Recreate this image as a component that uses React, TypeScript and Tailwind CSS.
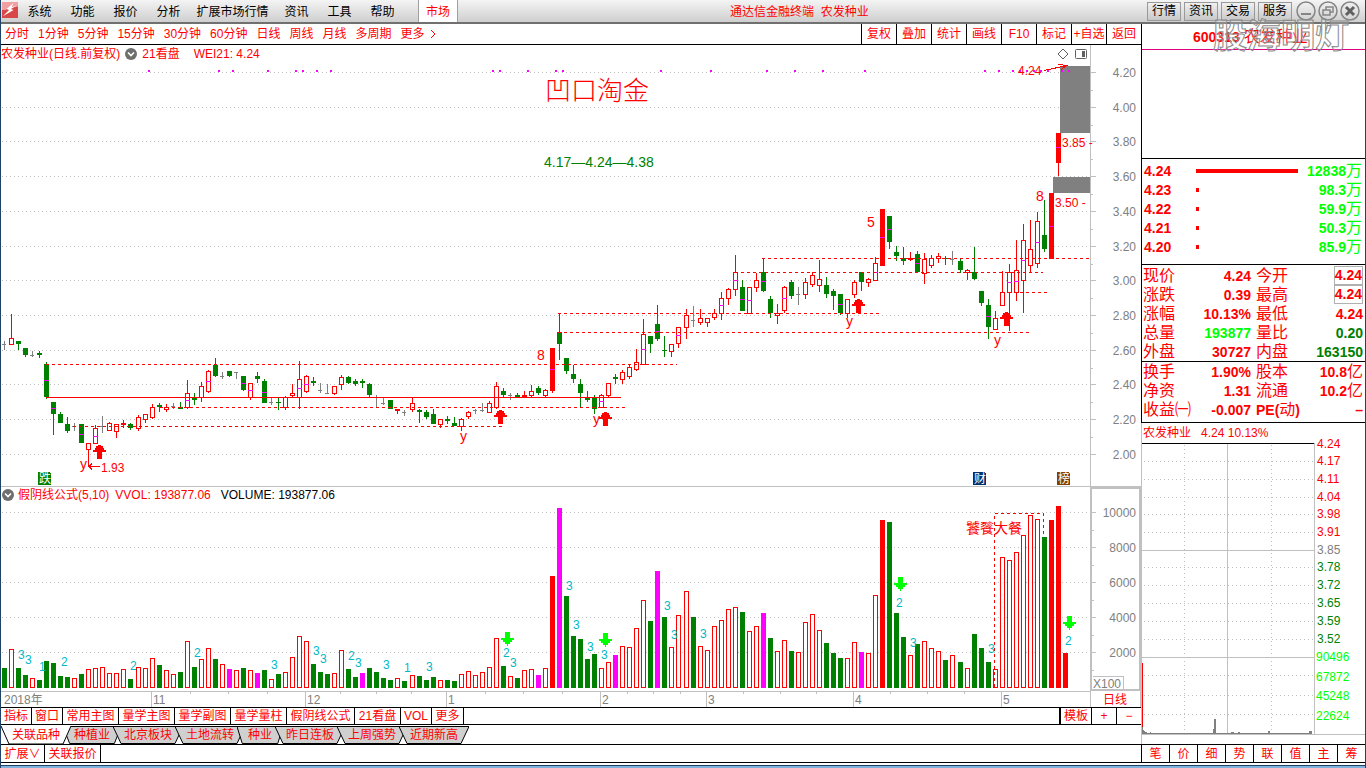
import type { ReactNode } from "react";
import clsx from "clsx";

// [kind, high, body top, body bottom, low, mid mark]
// r = hollow red, R = solid red, g = green, d = flat day (body top is the cross)
type Candle = [string, number, number, number, number, number?];

const candles: Candle[] = [
  ["d", 341, 344, 344, 350], ["r", 314, 338, 345, 345], ["g", 341, 341, 344, 350], ["g", 348, 348, 355, 357],
  ["d", 351, 355, 355, 357], ["g", 351, 353, 355, 358], ["g", 362, 364, 397, 399, 380], ["g", 402, 402, 414, 435, 408],
  ["g", 412, 414, 423, 423], ["g", 417, 424, 431, 433], ["d", 423, 426, 426, 431], ["g", 424, 424, 443, 443, 434],
  ["r", 443, 443, 450, 467], ["r", 425, 428, 444, 444, 436], ["d", 416, 426, 426, 433], ["r", 422, 423, 431, 431],
  ["r", 424, 424, 432, 438], ["r", 420, 423, 425, 428], ["g", 423, 424, 428, 430], ["r", 415, 417, 429, 431],
  ["r", 414, 414, 420, 423], ["r", 404, 407, 418, 419], ["g", 403, 405, 407, 412], ["r", 404, 407, 410, 412],
  ["d", 403, 406, 406, 409], ["g", 402, 407, 409, 409], ["r", 380, 393, 408, 409, 400], ["g", 393, 397, 400, 405],
  ["r", 382, 386, 398, 402], ["r", 370, 371, 392, 393, 381], ["g", 358, 365, 376, 377], ["d", 372, 376, 376, 379],
  ["g", 371, 371, 376, 377], ["d", 372, 372, 372, 379], ["g", 376, 376, 390, 391, 383], ["r", 383, 383, 398, 400, 390],
  ["g", 372, 376, 379, 383], ["g", 379, 381, 403, 403, 392], ["d", 398, 402, 402, 405], ["g", 398, 402, 403, 410],
  ["r", 396, 397, 408, 410], ["r", 384, 393, 396, 397], ["r", 361, 379, 398, 409, 388], ["r", 375, 376, 392, 393, 384],
  ["g", 377, 381, 383, 386], ["d", 383, 390, 390, 393], ["d", 384, 393, 393, 394], ["r", 386, 386, 394, 395],
  ["r", 375, 377, 385, 390], ["g", 376, 377, 383, 384], ["g", 379, 381, 384, 386], ["g", 379, 381, 383, 388],
  ["g", 383, 384, 395, 397], ["d", 395, 397, 397, 407], ["d", 398, 403, 403, 405], ["g", 400, 400, 409, 409],
  ["r", 409, 409, 411, 414], ["d", 410, 412, 412, 416], ["r", 398, 403, 410, 412], ["g", 409, 410, 412, 423],
  ["g", 410, 412, 417, 419], ["g", 409, 414, 424, 424], ["r", 419, 419, 425, 428], ["g", 416, 419, 421, 424],
  ["g", 417, 423, 426, 426], ["r", 418, 419, 427, 431], ["r", 411, 412, 417, 419], ["d", 409, 410, 410, 414],
  ["d", 403, 410, 410, 412], ["r", 401, 403, 413, 413], ["r", 382, 386, 408, 409], ["g", 388, 391, 395, 397],
  ["d", 393, 395, 395, 400], ["g", 393, 395, 397, 397], ["r", 391, 395, 397, 397], ["r", 385, 391, 396, 397],
  ["g", 386, 388, 393, 395], ["r", 389, 390, 396, 397], ["R", 348, 348, 391, 393, 369], ["g", 313, 332, 344, 360],
  ["g", 358, 358, 371, 374], ["g", 365, 374, 379, 383], ["g", 379, 384, 393, 407], ["g", 391, 397, 400, 402],
  ["g", 395, 398, 409, 414], ["r", 394, 395, 408, 408, 401], ["r", 383, 383, 396, 397], ["g", 374, 377, 379, 384],
  ["r", 370, 372, 380, 384], ["r", 364, 367, 377, 379], ["r", 349, 362, 370, 371], ["r", 319, 334, 365, 365, 349],
  ["g", 336, 336, 344, 353], ["g", 305, 324, 339, 341, 331], ["g", 336, 350, 351, 357], ["r", 344, 344, 352, 357],
  ["r", 327, 327, 344, 348, 335], ["r", 309, 315, 328, 339], ["d", 306, 320, 320, 327], ["r", 309, 318, 323, 325],
  ["r", 318, 318, 323, 327], ["r", 309, 313, 318, 320], ["r", 292, 298, 314, 320, 305], ["r", 288, 289, 299, 305],
  ["r", 255, 272, 290, 296, 280], ["g", 280, 287, 311, 311, 299], ["r", 287, 287, 314, 314, 300], ["r", 273, 280, 288, 292],
  ["g", 259, 272, 291, 292, 281], ["g", 296, 299, 313, 318], ["r", 304, 313, 316, 324], ["r", 286, 287, 311, 313, 298],
  ["g", 280, 282, 296, 299], ["d", 287, 294, 294, 305], ["r", 278, 282, 295, 299], ["r", 272, 275, 285, 287],
  ["r", 260, 279, 286, 292], ["g", 277, 285, 294, 298], ["g", 289, 291, 296, 310], ["g", 294, 294, 313, 315, 304],
  ["r", 299, 299, 314, 318], ["r", 280, 282, 295, 298], ["g", 272, 272, 282, 291], ["r", 278, 279, 283, 287],
  ["r", 257, 263, 281, 281, 272], ["R", 209, 209, 266, 266, 237], ["g", 216, 216, 242, 249, 229], ["g", 246, 252, 256, 261],
  ["g", 247, 258, 261, 265], ["r", 252, 258, 260, 261], ["g", 251, 254, 272, 272, 263], ["r", 253, 259, 274, 284],
  ["r", 255, 258, 266, 268], ["r", 253, 256, 259, 263], ["g", 256, 258, 259, 265], ["d", 251, 259, 259, 265],
  ["g", 259, 261, 270, 273], ["r", 269, 270, 273, 280], ["g", 247, 272, 279, 280], ["g", 291, 291, 303, 306],
  ["g", 299, 305, 327, 339, 316], ["r", 311, 318, 330, 330], ["r", 271, 292, 306, 306], ["r", 264, 272, 293, 331, 282],
  ["r", 240, 270, 293, 301, 281], ["r", 224, 240, 281, 313, 260], ["r", 220, 249, 266, 273], ["r", 212, 221, 264, 268, 242],
  ["g", 200, 235, 249, 252], ["R", 193, 193, 259, 259, 226], ["R", 133, 133, 163, 176, 147],
];

// kind + top of each volume bar, m = magenta
const volumes =
  "g668 r649 g668 g675 r678 g680 g661 g663 g676 g677 r678 g674 r669 r668 r667 r673 r673 r669 g679 r667 r668 r658 g665 r670 r674 g672 r641 g667 r659 r648 " +
  "g659 r664 m669 r670 g668 r670 m673 g670 r679 g674 r672 r657 r636 r641 g664 g672 g674 r673 r650 g669 g677 m673 g668 g672 g678 g680 r678 g681 r675 g676 " +
  "g680 g677 r680 g680 g681 r674 r671 r675 r672 r667 r638 g666 r676 g678 r670 r669 m675 r668 R576 m508 g596 g636 g639 g659 g654 r668 r662 m655 r646 r647 " +
  "r628 r600 g621 m571 g617 r647 r615 r591 g617 r646 r650 r626 r620 r609 r607 g612 r631 r626 m613 g638 r651 r640 g651 r652 r622 r614 r630 g643 g653 g658 " +
  "r658 r642 m652 r653 r595 R520 g522 g613 g637 r655 g644 r641 r648 r651 g660 r655 g662 r668 g634 g648 g662 r669 r557 r560 r552 r535 r515 r519 g537 R520 " +
  "R506 R653";

const slotX = (i: number) => Math.round(4.02 + i * 7.0257);

const colors: Record<string, string> = { r: "#ff0000", R: "#ff0000", g: "#008000", m: "#ff00ff", d: "#808080" };

const menu = [
  { label: "系统", width: "w-[43px]" },
  { label: "功能", width: "w-[43px]" },
  { label: "报价", width: "w-[43px]" },
  { label: "分析", width: "w-[43px]" },
  { label: "扩展市场行情", width: "w-[85px]" },
  { label: "资讯", width: "w-[43px]" },
  { label: "工具", width: "w-[43px]" },
  { label: "帮助", width: "w-[43px]" },
];

const periods = ["分时", "1分钟", "5分钟", "15分钟", "30分钟", "60分钟", "日线", "周线", "月线", "多周期", "更多"];
const tools = ["复权", "叠加", "统计", "画线", "F10", "标记", "+自选", "返回"];

const indicators = [
  { label: "指标", width: "w-[31px]" },
  { label: "窗口", width: "w-[31px]" },
  { label: "常用主图", width: "w-14" },
  { label: "量学主图", width: "w-14" },
  { label: "量学副图", width: "w-14" },
  { label: "量学量柱", width: "w-14" },
  { label: "假阴线公式", width: "w-[68px]" },
  { label: "21看盘", width: "w-[46px]" },
  { label: "VOL", width: "w-[31px]" },
  { label: "更多", width: "w-8" },
];

const sheets = ["关联品种", "种植业", "北京板块", "土地流转", "种业", "昨日连板", "上周强势", "近期新高"];

const levels = [
  { price: "4.24", bar: "w-[102px]", amount: "12838" },
  { price: "4.23", bar: "w-[3px]", amount: "98.3" },
  { price: "4.22", bar: "w-[3px]", amount: "59.9" },
  { price: "4.21", bar: "w-[3px]", amount: "50.3" },
  { price: "4.20", bar: "w-[3px]", amount: "85.9" },
];

type Cell = { value: string; unit?: string; color?: string; boxed?: boolean };
type QuoteRow = [ReactNode, Cell, ReactNode, Cell];

const quote: QuoteRow[] = [
  ["现价", { value: "4.24" }, "今开", { value: "4.24", boxed: true }],
  ["涨跌", { value: "0.39" }, "最高", { value: "4.24", boxed: true }],
  ["涨幅", { value: "10.13%" }, "最低", { value: "4.24" }],
  ["总量", { value: "193877", color: "text-[#00ff00]" }, "量比", { value: "0.20", color: "text-[#008000]" }],
  ["外盘", { value: "30727" }, "内盘", { value: "163150", color: "text-[#008000]" }],
];

const finance: QuoteRow[] = [
  ["换手", { value: "1.90%" }, "股本", { value: "10.8", unit: "亿" }],
  ["净资", { value: "1.31" }, "流通", { value: "10.2", unit: "亿" }],
  ["收益㈠", { value: "-0.007" }, <><b className="text-sm leading-none">PE(</b>动<b className="text-sm leading-none">)</b></>, { value: "– " }],
];

const priceGrid: [number, string][] = [
  [72, "4.20"], [107, "4.00"], [141, "3.80"], [176, "3.60"], [211, "3.40"], [246, "3.20"],
  [280, "3.00"], [315, "2.80"], [350, "2.60"], [384, "2.40"], [419, "2.20"], [454, "2.00"],
];
const volumeGrid: [number, string][] = [[512, "10000"], [547, "8000"], [582, "6000"], [617, "4000"], [652, "2000"]];

// y, x start, x end
const dashed = [
  [364, 46, 677], [407, 160, 628], [426, 73, 502], [313, 558, 879],
  [332, 558, 1029], [258, 762, 1090], [272, 735, 1043], [292, 1002, 1050],
];

const signalDots = [
  149, 219, 233, 268, 296, 303, 317, 331, 493, 500, 528, 556, 563, 661, 711, 767, 795, 823, 865,
  985, 999, 1013, 1020, 1027, 1034, 1041, 1048, 1062, 1069,
];

const marks: [number, number, string][] = [
  [80, 469, "y"], [460, 441, "y"], [593, 424, "y"], [846, 326, "y"], [994, 345, "y"],
  [537, 360, "8"], [867, 227, "5"], [1036, 201, "8"],
];

const counts: [number, number, string][] = [
  [18, 659, "3"], [25, 664, "3"], [39, 671, "1"], [61, 666, "2"], [130, 670, "2"], [194, 657, "2"],
  [271, 669, "3"], [313, 655, "3"], [320, 663, "3"], [348, 660, "2"], [355, 667, "3"], [383, 669, "3"],
  [404, 672, "1"], [426, 671, "3"], [503, 657, "2"], [510, 667, "3"], [566, 590, "3"], [573, 629, "3"],
  [587, 651, "3"], [601, 659, "3"], [664, 610, "3"], [671, 639, "3"], [700, 638, "3"], [896, 607, "2"],
  [910, 647, "3"], [988, 653, "3"], [1065, 645, "2"],
];

const months: [number, string][] = [[151, "11"], [305, "12"], [446, "1"], [600, "2"], [706, "3"], [853, "4"], [1001, "5"]];
const weeks = [190, 228, 267, 340, 376, 411, 485, 523, 562, 627, 653, 680, 743, 780, 816, 890, 927, 964];

const tickPrices: [number, string, string][] = [
  [444, "4.24", "#ff0000"], [461, "4.17", "#ff0000"], [479, "4.11", "#ff0000"], [497, "4.04", "#ff0000"],
  [514, "3.98", "#ff0000"], [532, "3.91", "#ff0000"], [550, "3.85", "#808080"], [567, "3.78", "#008000"],
  [585, "3.72", "#008000"], [603, "3.65", "#008000"], [621, "3.59", "#008000"], [639, "3.52", "#008000"],
  [657, "90496", "#00ff00"], [677, "67872", "#00ff00"], [696, "45248", "#00ff00"], [716, "22624", "#00ff00"],
];
const tickGrid = [461, 479, 497, 514, 532, 567, 585, 603, 621, 639, 675, 695, 714];

function Dropdown() {
  return (
    <svg viewBox="0 0 12 12" className="w-3 h-3 shrink-0">
      <circle cx="6" cy="6" r="6" fill="#6e6e6e" />
      <path d="M3 4.5 6 7.5 9 4.5" fill="none" stroke="#fff" strokeWidth="1.6" />
    </svg>
  );
}

function Arrow({ x, y, down }: { x: number; y: number; down?: boolean }) {
  return down ? (
    <path d={`M${x + 4} ${y}h5v6h4v2h-2v2h-2v2h-2v2h-1v-2h-2v-2h-2v-2h-2v-2h4z`} fill="#00ff00" />
  ) : (
    <path d={`M${x + 5} ${y}h3v1h2v2h1v2h2v2h-4v7h-5v-7h-4v-2h2v-2h1v-2h2z`} fill="#ff0000" />
  );
}

function Badge({ x, label, fill }: { x: number; label: string; fill: string }) {
  return (
    <g>
      <path d={`M${x} 472h12l1 2v11h-13z`} fill={fill} />
      <text x={x + 1} y={483} fontSize={12} fill="#fff">{label}</text>
    </g>
  );
}

function CandleShape({ candle, x }: { candle: Candle; x: number }) {
  const [kind, high, top, bottom, low, mid] = candle;
  const color = colors[kind];
  if (kind === "d") {
    return (
      <g fill={color}>
        <rect x={x} y={high} width={1} height={low - high} />
        <rect x={x - 2} y={top} width={4} height={1} />
      </g>
    );
  }
  return (
    <g>
      <rect x={x} y={high} width={1} height={low - high} fill={color} />
      {kind === "r" && bottom - top > 2 ? (
        <rect x={x - 1.5} y={top + 0.5} width={4} height={bottom - top - 1} fill="#fff" stroke={color} />
      ) : (
        <rect x={x - 2} y={top} width={5} height={Math.max(bottom - top, 1)} fill={color} />
      )}
      {mid && <rect x={x - 2} y={mid} width={5} height={1} fill="#ff00ff" />}
    </g>
  );
}

function PriceChart() {
  return (
    <svg viewBox="1 63 1140 424" className="block w-full" shapeRendering="crispEdges">
      {priceGrid.map(([y, label], i) => (
        <g key={label}>
          <path d={`M2 ${y + 0.5}H1090`} stroke="#c0c0c0" strokeDasharray="1 3" />
          <path d={`M1091 ${y + 0.5}h5`} stroke="#c0c0c0" />
          {i < 11 && <path d={`M1091 ${y + 18.5}h2`} stroke="#c0c0c0" />}
          <text x={1136} y={y + 5} textAnchor="end" fontSize={12} fill="#808080">{label}</text>
        </g>
      ))}
      <path d="M1090.5 63V486" stroke="#c0c0c0" />
      <path d="M1 486.5H1141" stroke="#c0c0c0" />
      <rect x={1060} y={66} width={30} height={67} fill="#808080" />
      <rect x={1053} y={177} width={37} height={16} fill="#808080" />
      {candles.map((candle, i) => (
        <CandleShape key={i} candle={candle} x={slotX(i)} />
      ))}
      {dashed.map(([y, from, to]) => (
        <path key={`${y}-${from}`} d={`M${from} ${y + 0.5}H${to}`} stroke="#ff0000" strokeDasharray="3 3" />
      ))}
      <path d="M46 397.5H621" stroke="#ff0000" />
      {marks.map(([x, y, label]) => (
        <text key={`${x}-${y}`} x={x} y={y} fontSize={14} fill="#ff0000">{label}</text>
      ))}
      <Arrow x={93} y={445} />
      <Arrow x={494} y={410} />
      <Arrow x={599} y={412} />
      <Arrow x={852} y={299} />
      <Arrow x={1000} y={312} />
      <path d="M89 466.5H100M92 463.5l-3 3l3 3" stroke="#ff0000" fill="none" />
      <text x={101} y={472} fontSize={12} fill="#ff0000">1.93</text>
      <text x={1018} y={75} fontSize={12} fill="#ff0000">4.24</text>
      <path d="M1044 70.5L1067 65.5M1058 64.5l9 1l-6 4" stroke="#ff0000" fill="none" />
      <text x={1062} y={147} fontSize={12} fill="#ff0000">3.85 -</text>
      <text x={1055} y={207} fontSize={12} fill="#ff0000">3.50 -</text>
      {signalDots.map((x) => (
        <rect key={x} x={x - 1} y={70} width={2} height={2} fill="#ff00ff" />
      ))}
      <text x={545} y={100} fontSize={26} fill="#ff0000" className="font-light">凹口淘金</text>
      <text x={544} y={167} fontSize={14} fill="#008000">4.17—4.24—4.38</text>
      <Badge x={38} label="跌" fill="#008000" />
      <Badge x={973} label="财" fill="#003070" />
      <Badge x={1057} label="榜" fill="#804000" />
    </svg>
  );
}

function VolumeChart() {
  return (
    <svg viewBox="1 504 1140 203" className="block w-full" shapeRendering="crispEdges">
      {volumeGrid.map(([y, label]) => (
        <g key={label}>
          <path d={`M2 ${y + 0.5}H1090`} stroke="#c0c0c0" strokeDasharray="1 3" />
          <path d={`M1092 ${y + 0.5}h4M1092 ${y + 18}h2`} stroke="#c0c0c0" />
          <text x={1136} y={y + 5} textAnchor="end" fontSize={12} fill="#808080">{label}</text>
        </g>
      ))}
      {volumes.split(" ").map((bar, i) => {
        const kind = bar[0];
        const top = Number(bar.slice(1));
        const x = slotX(i);
        return kind === "r" ? (
          <rect key={i} x={x - 1.5} y={top + 0.5} width={4} height={687 - top} fill="#fff" stroke="#ff0000" />
        ) : (
          <rect key={i} x={x - 2} y={top} width={5} height={688 - top} fill={colors[kind]} />
        );
      })}
      <path d="M994.5 687V513.5H1043.5V687" fill="none" stroke="#ff0000" strokeDasharray="3 3" />
      <text x={966} y={533} fontSize={14} fill="#ff0000">饕餮大餐</text>
      {counts.map(([x, y, label]) => (
        <text key={`${x}-${y}`} x={x} y={y} fontSize={12} fill="#00b8c8">{label}</text>
      ))}
      <Arrow x={501} y={632} down />
      <Arrow x={599} y={633} down />
      <Arrow x={894} y={577} down />
      <Arrow x={1063} y={616} down />
      <path d="M1 691.5H1090M1092.5 676.5H1123.5V690" fill="none" stroke="#c0c0c0" />
      <path d="M1091 504V690H1140V504" fill="none" stroke="#c0c0c0" strokeWidth={2} />
      <path d="M1090.5 691V707M1140.5 691V707" stroke="#c0c0c0" />
      {months.map(([x, label]) => (
        <g key={label}>
          <path d={`M${x + 0.5} 691V707`} stroke="#c0c0c0" />
          <text x={x + 2} y={704} fontSize={12} fill="#808080">{label}</text>
        </g>
      ))}
      {weeks.map((x) => (
        <path key={x} d={`M${x + 0.5} 692v2`} stroke="#c0c0c0" />
      ))}
      <text x={4} y={704} fontSize={12} fill="#808080">2018年</text>
      <text x={1093} y={688} fontSize={12} fill="#808080">X100</text>
      <text x={1103} y={704} fontSize={12} fill="#ff0000">日线</text>
    </svg>
  );
}

function TickChart() {
  return (
    <svg viewBox="1142 443 223 301" className="block w-full overflow-visible" shapeRendering="crispEdges">
      {tickGrid.map((y) => (
        <path key={y} d={`M1144 ${y + 0.5}H1314`} stroke="#c0c0c0" strokeDasharray="1 3" />
      ))}
      <path d="M1184.5 445V734M1271.5 445V734" stroke="#c0c0c0" strokeDasharray="1 3" />
      <path d="M1227.5 444V734M1314.5 443V734M1142 550.5H1314M1142 657.5H1314M1142 734.5H1365" stroke="#c0c0c0" />
      <path d="M1142 443.5H1314" stroke="#000" />
      <path
        d="M1142 734v-7h1v3h1v1h1v1h2v1h3v-1h1v2zM1151 733h62v-4h1v-10h2v14h15v-1h3v1h4v-1h2v1h28v-2h2v2h39v-2h3v3h-161z"
        fill="#808080"
      />
      <rect x={1142} y={663} width={1} height={64} fill="#ff0000" />
      {tickPrices.map(([y, label, color]) => (
        <text key={label} x={y >= 657 ? 1316 : 1317} y={y + 4} fontSize={12} fill={color}>{label}</text>
      ))}
    </svg>
  );
}

function QuoteTable({ rows }: { rows: QuoteRow[] }) {
  const renderCell = (cell: Cell) => (
    <span className={clsx("inline-block text-sm leading-4 font-bold", cell.color, cell.boxed && "border border-[#b0b0b0] leading-[17px]")}>
      {cell.value}
      {cell.unit && <span className="text-base leading-none font-normal">{cell.unit}</span>}
    </span>
  );

  return (
    <table className="w-full table-fixed border-collapse">
      <tbody>
        {rows.map(([label, value, label2, value2], i) => (
          <tr key={i} className="h-[19px] leading-none">
            <th className="w-[50px] p-0 pl-px text-left text-base leading-none font-normal whitespace-nowrap">{label}</th>
            <td className="w-[60px] p-0 pr-px text-right leading-none">{renderCell(value)}</td>
            <th className="w-[50px] p-0 pl-1 text-left text-base leading-none font-normal whitespace-nowrap">{label2}</th>
            <td className="p-0 pr-0.5 text-right leading-none whitespace-nowrap">{renderCell(value2)}</td>
          </tr>
        ))}
      </tbody>
    </table>
  );
}

function TitleBar() {
  return (
    <header className="relative flex h-6 items-stretch border-b-2 border-[#707070] bg-gradient-to-b from-[#f4f4f4] to-[#cfcfcf] text-black">
      <svg viewBox="0 0 18 18" className="mt-0.5 ml-px h-4 w-4 shrink-0">
        <rect width="18" height="18" fill="#d84848" />
        <path d="M0 0H18V5L11 6 13 2 4 9H0z" fill="#f0a0a0" />
        <path d="M13 1 5 8l3 1-7 7 12-7-3-1 7-4-6 2z" fill="#fff" />
      </svg>
      <nav className="flex">
        {menu.map((item) => (
          <button key={item.label} className={clsx("h-full pt-0.5 text-center", item.width)}>
            {item.label}
          </button>
        ))}
        <button className="ml-[14px] h-full w-10 border-x border-[#a0a0a0] bg-white pt-0.5 text-[#ff0000]">市场</button>
      </nav>
      <h1 className="flex flex-1 items-center pt-0.5 pl-[272px] text-[#ff0000]">通达信金融终端&nbsp; 农发种业</h1>
      <div className="flex items-center gap-[3px]">
        {["行情", "资讯", "交易", "服务"].map((label) => (
          <button key={label} className="h-[19px] w-[34px] border border-[#999] bg-gradient-to-b from-[#f0f0f0] to-[#c8c8c8]">
            {label}
          </button>
        ))}
      </div>
      <svg viewBox="0 0 68 22" className="mr-0.5 ml-[3px] h-[22px] w-[68px] shrink-0" fill="none" stroke="#858585" strokeWidth="1.5">
        <circle cx="11" cy="11" r="9" />
        <circle cx="33" cy="11" r="9" />
        <circle cx="55" cy="11" r="9" />
        <path d="M6 14h10" strokeWidth="2" />
        <path d="M31 10V7h7v5h-3M28 10h7v5h-7z" />
        <path d="M51 7l8 8M59 7l-8 8" stroke="#606060" strokeWidth="3" />
      </svg>
      {/* channel watermark over the caption buttons */}
      <div className="pointer-events-none absolute top-4 right-4 z-20 text-[34px] leading-10 font-bold text-white/20 [-webkit-text-stroke:1px_#8a8a8a]">
        股海明灯
      </div>
    </header>
  );
}

function SheetTabs() {
  return (
    <div className="flex h-5 items-end border-b border-black">
      {sheets.map((label, i) => (
        <button
          key={label}
          className={clsx("relative h-[18px] px-[11px]", i === 0 ? "z-10" : "-ml-2")}
        >
          <svg viewBox="0 0 70 18" preserveAspectRatio="none" className="absolute inset-0 h-full w-full">
            <path
              d={i === 0 ? "M0 0 8 18H62L70 0" : "M0 0.5H70L62 17.5H8z"}
              fill={i === 0 ? "#fff" : "#d0d0d0"}
              stroke="#000"
              vectorEffect="non-scaling-stroke"
            />
          </svg>
          <span className="relative">{label}</span>
        </button>
      ))}
    </div>
  );
}

export default function App() {
  return (
    <div className="flex min-h-screen flex-col border-x border-[#1f4468] bg-white font-['Liberation_Sans','Noto_Sans_CJK_SC',sans-serif] text-xs leading-4 text-[#ff0000]">
      <TitleBar />

      <div className="flex">
        <main className="min-w-0 flex-1">
          <div className="flex h-[21px] items-center border-b border-black">
            <nav className="flex flex-1 gap-[9px] pl-1">
              {periods.map((label) => (
                <button key={label}>{label}</button>
              ))}
              <svg viewBox="0 0 6 10" className="-ml-1 h-[10px] w-[6px] self-center" fill="none" stroke="#ff0000">
                <path d="M1 1 5 5 1 9" />
              </svg>
            </nav>
            <div className="flex h-full">
              {tools.map((label) => (
                <button key={label} className="h-full w-[35px] border-l border-black whitespace-nowrap">
                  {label}
                </button>
              ))}
            </div>
          </div>

          <div className="flex h-[18px] items-center">
            <h2>农发种业(日线.前复权)</h2>
            <button aria-label="指标菜单" className="ml-[5px]"><Dropdown /></button>
            <span className="ml-[5px]">21看盘</span>
            <span className="ml-[14px] flex-1">WEI21: 4.24</span>
            <svg viewBox="0 0 30 12" className="mr-[3px] h-3 w-[30px]" fill="none" stroke="#606060">
              <path d="M6 1 11 6 6 11 1 6z" />
              <rect x="18.5" y="1.5" width="11" height="9" rx="1" />
              <rect x="25" y="3" width="3" height="6" fill="#606060" stroke="none" />
            </svg>
            <div className="h-full w-[51px] border-l border-[#c0c0c0]" />
          </div>
          <PriceChart />

          <div className="flex h-[17px]">
            <div className="flex flex-1 items-center pb-0.5">
              <button aria-label="副图菜单" className="ml-px"><Dropdown /></button>
              <h2 className="ml-1">假阴线公式(5,10)</h2>
              <span className="ml-[6px]">VVOL: 193877.06</span>
              <span className="ml-[10px] text-black">VOLUME: 193877.06</span>
            </div>
            <div className="h-full w-[51px] border-2 border-b-0 border-[#c0c0c0]" />
          </div>
          <VolumeChart />

          <div className="flex h-[18px] border-y border-black">
            {indicators.map((item) => (
              <button key={item.label} className={clsx("h-full border-r border-black whitespace-nowrap", item.width)}>
                {item.label}
              </button>
            ))}
            <div className="flex-1" />
            <button className="h-full w-8 border-l-2 border-black">模板</button>
            <button className="h-full w-[25px] border-l border-black">+</button>
            <button className="h-full w-[25px] border-l border-black">−</button>
          </div>

          <SheetTabs />

          <div className="flex h-[18px] border-b border-black">
            <button className="h-full w-11 border-r border-black">扩展∨</button>
            <button className="h-full w-14 border-r border-black whitespace-nowrap">关联报价</button>
          </div>
        </main>

        <aside className="w-56 shrink-0">
          <div className="border-l border-black">
            <div className="flex h-[26px] items-center gap-1 border-b border-[#e0007f] pl-[51px]">
              <b className="text-sm">600313</b>
              <span className="text-base">农发种业</span>
            </div>
            <div className="h-[109px] border-b border-black" />

            <div className="border-b border-black pt-0.5 pb-2">
              <table className="w-full table-fixed border-collapse">
                <tbody>
                  {levels.map((level) => (
                    <tr key={level.price} className="h-[19px]">
                      <td className="w-[54px] p-0 pl-0.5 text-sm leading-4 font-bold">{level.price}</td>
                      <td className="p-0">
                        <div className={clsx("h-1 bg-[#ff0000]", level.bar)} />
                      </td>
                      <td className="w-[66px] p-0 pr-[3px] text-right text-sm leading-4 font-bold whitespace-nowrap text-[#00ff00]">
                        {level.amount}
                        <span className="text-base leading-4 font-normal">万</span>
                      </td>
                    </tr>
                  ))}
                </tbody>
              </table>
            </div>

            <div className="border-b border-black pt-px">
              <QuoteTable rows={quote} />
            </div>
            <div className="border-b border-black pb-[3px]">
              <QuoteTable rows={finance} />
            </div>
          </div>

          <div className="border-l border-[#c0c0c0]">
            <div className="flex h-5 items-center gap-[10px] pl-px">
              <span>农发种业</span>
              <span>4.24 10.13%</span>
            </div>
            <TickChart />
          </div>
          <div className="grid h-[19px] grid-cols-8 border-y border-black">
            {["笔", "价", "细", "势", "联", "值", "主", "筹"].map((label) => (
              <button key={label} className="h-full border-l border-black">{label}</button>
            ))}
          </div>
        </aside>
      </div>

      <footer className="mt-0.5 min-h-[3px] flex-1 border-t border-[#1f4468] bg-[#7fb2dc]" />
    </div>
  );
}
